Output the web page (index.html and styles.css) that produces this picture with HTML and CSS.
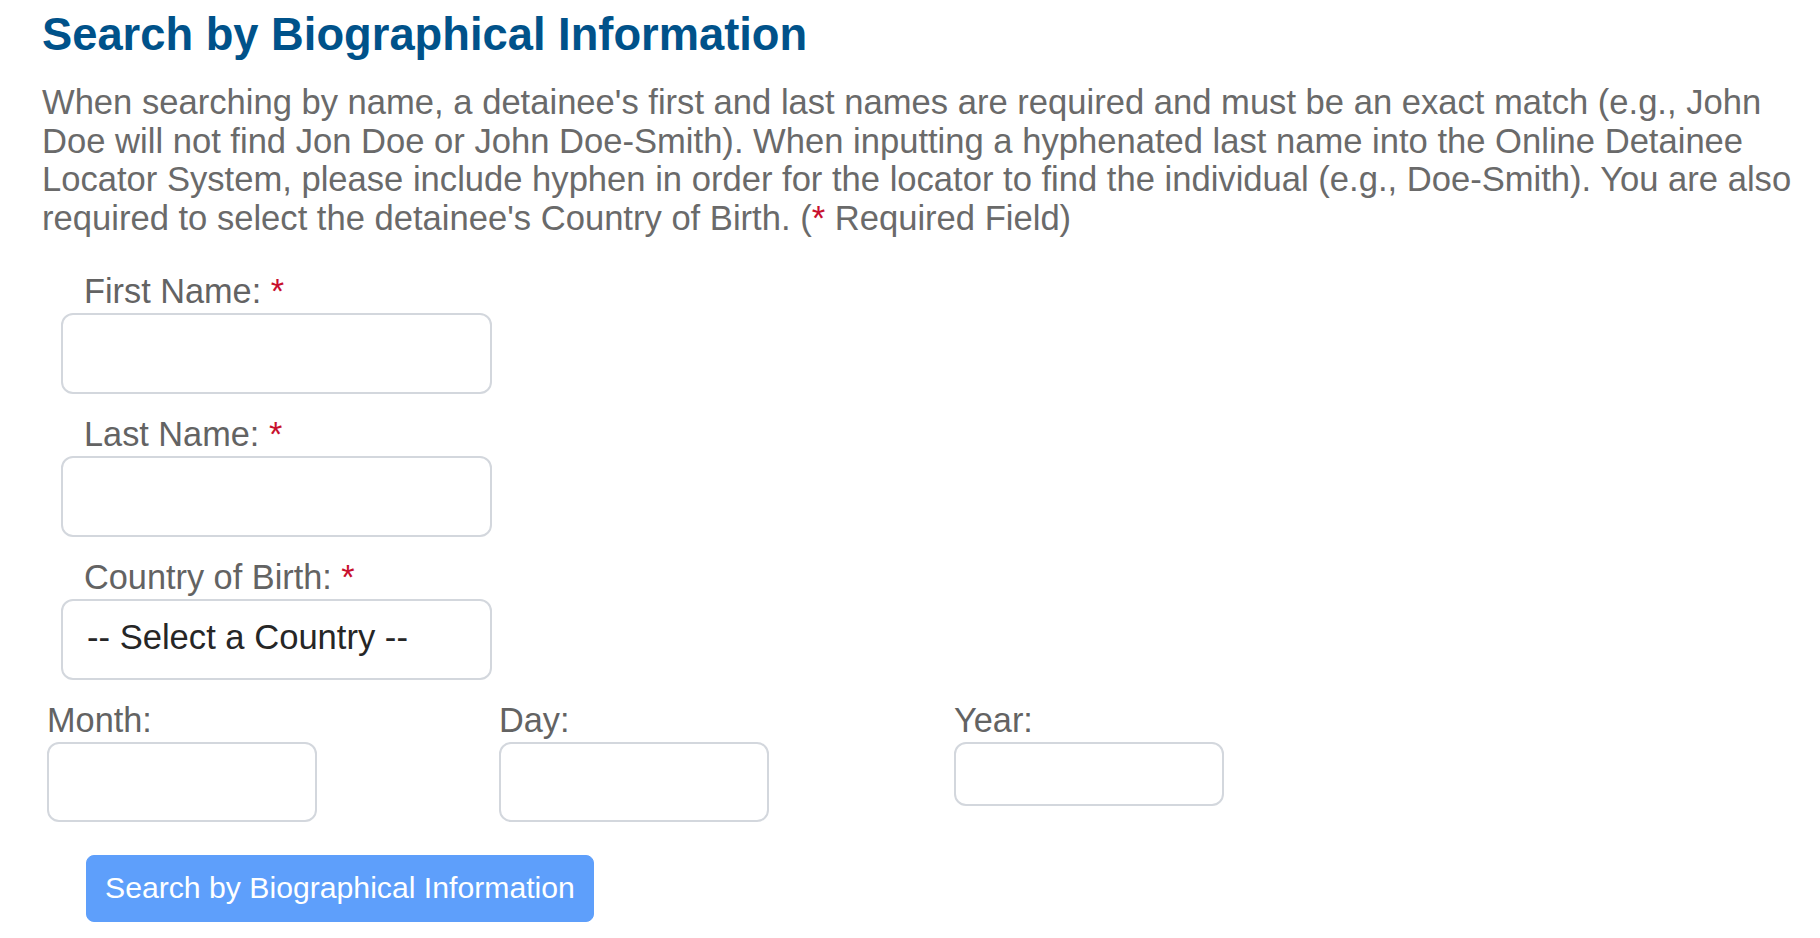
FILE: index.html
```html
<!DOCTYPE html>
<html lang="en">
<head>
<meta charset="utf-8">
<title>Search by Biographical Information</title>
<link rel="stylesheet" href="styles.css">
</head>
<body>
<main class="page">
  <h1 class="title">Search by Biographical Information</h1>
  <p class="intro">When searching by name, a detainee's first and last names are required and must be an exact match (e.g., John Doe will not find Jon Doe or John Doe-Smith). When inputting a hyphenated last name into the Online Detainee Locator System, please include hyphen in order for the locator to find the individual (e.g., Doe-Smith). You are also required to select the detainee's Country of Birth. (<span class="req">*</span>&nbsp;Required Field)</p>

  <form class="form">
    <div class="group">
      <label class="label" for="first">First Name: <span class="req">*</span></label>
      <input class="field" id="first" type="text">
    </div>
    <div class="group">
      <label class="label" for="last">Last Name: <span class="req">*</span></label>
      <input class="field" id="last" type="text">
    </div>
    <div class="group">
      <label class="label" for="country">Country of Birth: <span class="req">*</span></label>
      <select class="field select" id="country">
        <option>-- Select a Country --</option>
      </select>
    </div>

    <div class="dob">
      <div class="dob-col">
        <label class="label plain" for="month">Month:</label>
        <input class="box" id="month" type="text">
      </div>
      <div class="dob-col">
        <label class="label plain" for="day">Day:</label>
        <input class="box" id="day" type="text">
      </div>
      <div class="dob-col">
        <label class="label plain" for="year">Year:</label>
        <input class="box short" id="year" type="text">
      </div>
    </div>

    <button class="submit" type="button">Search by Biographical Information</button>
  </form>
</main>
</body>
</html>
```

FILE: styles.css
```css
html, body {
  margin: 0;
  padding: 0;
  background: #ffffff;
}

body {
  font-family: "Liberation Sans", Arial, Helvetica, sans-serif;
  color: #666666;
}

.page {
  padding: 10px 0 0 42px;
  width: 1762px;
}

.title {
  margin: 0;
  font-size: 45.3px;
  line-height: 50px;
  font-weight: bold;
  color: #00528a;
}

.intro {
  margin: 23px 0 0 0;
  font-size: 34.6px;
  line-height: 38.5px;
  color: #6a6a6a;
}

.req {
  color: #c8102e;
}

.form {
  margin-top: 35px;
}

.group {
  display: flex;
  flex-direction: column;
  align-items: flex-start;
  margin: 0 0 21px 19px;
}

.label {
  display: block;
  font-size: 34.3px;
  line-height: 38.5px;
  color: #636363;
  padding-left: 23px;
  margin-bottom: 2.5px;
}

.label.plain {
  padding-left: 0;
}

.field {
  box-sizing: border-box;
  width: 431px;
  height: 81px;
  border: 2px solid #d3d7dd;
  border-radius: 12px;
  background: #ffffff;
  font-family: inherit;
  font-size: 34.6px;
  color: #222222;
  padding: 0 0 0 24px;
  margin: 0;
  outline: none;
}

.select {
  appearance: none;
  -webkit-appearance: none;
  color: #262626;
  padding-bottom: 6px;
}

.dob {
  display: grid;
  grid-template-columns: 452px 455px 453px;
  margin-left: 5px;
  align-items: start;
}

.dob-col {
  display: flex;
  flex-direction: column;
  align-items: flex-start;
}

.box {
  box-sizing: border-box;
  width: 270px;
  height: 80px;
  border: 2px solid #d3d7dd;
  border-radius: 12px;
  background: #ffffff;
  margin: 0;
  padding: 0;
  outline: none;
}

.box.short {
  height: 64px;
}

.submit {
  display: block;
  box-sizing: border-box;
  margin: 33px 0 0 44px;
  height: 67px;
  padding: 0 18px;
  background: #5e9ffb;
  border: 1px solid #5e9ffb;
  border-radius: 8px;
  color: #ffffff;
  font-family: inherit;
  font-size: 30.2px;
  line-height: 1;
  cursor: pointer;
}
```
